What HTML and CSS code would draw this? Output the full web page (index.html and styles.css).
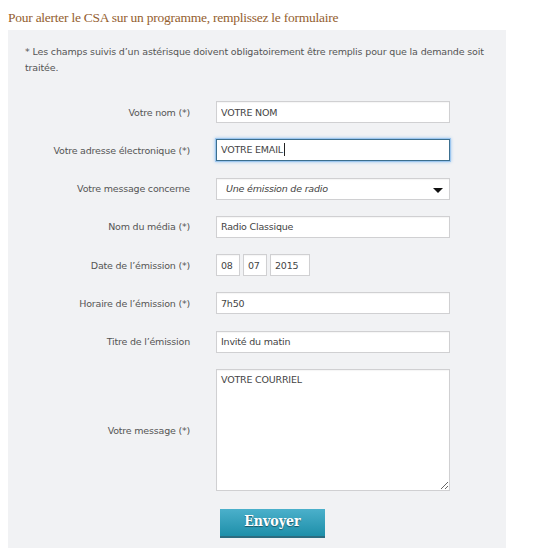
FILE: index.html
```html
<!DOCTYPE html>
<html lang="fr">
<head>
	<meta charset="UTF-8">
	<title>Alerter le CSA</title>
	<link rel="stylesheet" href="styles.css">
</head>
<body>
	<h1 class="title">Pour alerter le CSA sur un programme, remplissez le formulaire</h1>
	<div class="panel">
		<p class="note">* Les champs suivis d’un astérisque doivent obligatoirement être remplis pour que la demande soit traitée.</p>
		<form class="form">
			<label class="label">Votre nom (*)</label>
			<input type="text" class="field" value="VOTRE NOM">

			<label class="label">Votre adresse électronique (*)</label>
			<div class="field focus">VOTRE EMAIL<span class="caret"></span></div>

			<label class="label">Votre message concerne</label>
			<div class="field select">Une émission de radio<span class="arrow"></span></div>

			<label class="label">Nom du média (*)</label>
			<input type="text" class="field" value="Radio Classique">

			<label class="label">Date de l’émission (*)</label>
			<div class="date">
				<input type="text" class="field day" value="08">
				<input type="text" class="field day" value="07">
				<input type="text" class="field year" value="2015">
			</div>

			<label class="label">Horaire de l’émission (*)</label>
			<input type="text" class="field" value="7h50">

			<label class="label">Titre de l’émission</label>
			<input type="text" class="field" value="Invité du matin">

			<label class="label">Votre message (*)</label>
			<textarea class="field message">VOTRE COURRIEL</textarea>

			<span></span>
			<div class="actions"><button type="button" class="send">Envoyer</button></div>
		</form>
	</div>
</body>
</html>
```

FILE: styles.css
```css
body {
	margin: 0;
	background: #fff;
	font-family: "DejaVu Sans", Verdana, sans-serif;
}
.title {
	margin: 0;
	padding: 8px 0 0 8px;
	height: 22px;
	color: #94602f;
	font-family: "Liberation Serif", serif;
	font-size: 13.5px;
	font-weight: normal;
	line-height: 20px;
	letter-spacing: -0.25px;
}
.panel {
	width: 498px;
	height: 520px;
	margin-left: 8px;
	background: #f1f2f4;
	overflow: hidden;
}
.note {
	margin: 0;
	padding: 14px 15px 0 17px;
	color: #555;
	font-size: 9.5px;
	letter-spacing: -0.15px;
	line-height: 16px;
}
.form {
	display: grid;
	grid-template-columns: 182px 234px;
	column-gap: 26px;
	row-gap: 16.3px;
	margin-top: 25px;
}
.label {
	align-self: center;
	text-align: right;
	color: #555;
	font-size: 9.5px;
	letter-spacing: -0.2px;
}
.field {
	box-sizing: border-box;
	height: 22px;
	margin: 0;
	padding: 0 4px;
	background: #fff;
	border: 1px solid #d0d0d2;
	box-shadow: inset 0 1px 1px rgba(0,0,0,.04);
	color: #444;
	font-family: "DejaVu Sans", Verdana, sans-serif;
	font-size: 9.5px;
	letter-spacing: -0.2px;
	line-height: 20px;
	outline: none;
}
.focus {
	border-color: #3c6f8f;
	box-shadow: 0 0 0 1px #9cc6ef, 0 0 3px 1px #9cc6ef;
}
.caret {
	display: inline-block;
	width: 1px;
	height: 13px;
	margin-left: 1px;
	vertical-align: -3px;
	background: #222;
}
.select {
	position: relative;
	font-style: italic;
	padding-left: 9px;
}
.arrow {
	position: absolute;
	right: 6px;
	top: 9px;
	border-left: 5px solid transparent;
	border-right: 5px solid transparent;
	border-top: 5px solid #111;
}
.date {
	display: flex;
	gap: 3px;
}
.day {
	width: 24px;
}
.year {
	width: 40px;
}
.message {
	height: 122px;
	padding: 3px 4px;
	line-height: 14px;
	resize: both;
}
.actions {
	padding: 2px 0 0 4px;
}
.send {
	width: 105px;
	height: 29px;
	padding: 0 0 3px 0;
	border: none;
	border-bottom: 2px solid #2c6c80;
	background: linear-gradient(#4bb0cb, #1e8fa9);
	color: #fff;
	font-family: "DejaVu Serif Condensed", "DejaVu Serif", serif;
	font-size: 14px;
	font-weight: bold;
	text-shadow: 0 1px 1px rgba(0,0,0,.45);
}
```
